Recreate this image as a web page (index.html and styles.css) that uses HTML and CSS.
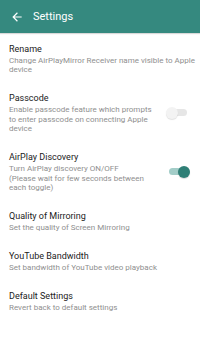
FILE: index.html
```html
<!DOCTYPE html>
<html>
<head>
<meta charset="utf-8">
<link rel="stylesheet" href="styles.css">
</head>
<body>
<header class="appbar">
  <svg class="back" width="14" height="14" viewBox="0 0 24 24"><path d="M20 11H7.83l5.59-5.59L12 4l-8 8 8 8 1.41-1.41L7.83 13H20v-2z" fill="#fff"/></svg>
  <span class="title">Settings</span>
</header>
<main class="list">
  <div class="item">
    <div class="text">
      <div class="name">Rename</div>
      <div class="desc">Change AirPlayMirror Receiver name visible to Apple device</div>
    </div>
  </div>
  <div class="item">
    <div class="text narrow">
      <div class="name">Passcode</div>
      <div class="desc">Enable passcode feature which prompts<br>to enter passcode on connecting Apple<br>device</div>
    </div>
    <div class="switch off"><div class="track"></div><div class="thumb"></div></div>
  </div>
  <div class="item">
    <div class="text narrow">
      <div class="name">AirPlay Discovery</div>
      <div class="desc">Turn AirPlay discovery ON/OFF<br>(Please wait for few seconds between<br>each toggle)</div>
    </div>
    <div class="switch on"><div class="track"></div><div class="thumb"></div></div>
  </div>
  <div class="item">
    <div class="text">
      <div class="name">Quality of Mirroring</div>
      <div class="desc">Set the quality of Screen Mirroring</div>
    </div>
  </div>
  <div class="item">
    <div class="text">
      <div class="name">YouTube Bandwidth</div>
      <div class="desc">Set bandwidth of YouTube video playback</div>
    </div>
  </div>
  <div class="item">
    <div class="text">
      <div class="name">Default Settings</div>
      <div class="desc">Revert back to default settings</div>
    </div>
  </div>
</main>
</body>
</html>
```
FILE: styles.css
```css
html, body {
  margin: 0;
  padding: 0;
  background: #fff;
  font-family: Roboto, "Liberation Sans", sans-serif;
}
.appbar {
  height: 33px;
  background: #35897f;
  display: flex;
  align-items: center;
  box-shadow: 0 1px 1px rgba(0,0,0,0.15);
}
.back {
  margin-left: 10px;
  margin-right: 9px;
}
.title {
  color: #fff;
  font-size: 11px;
  line-height: 13px;
}
.list {
  display: flex;
  flex-direction: column;
}
.item {
  display: flex;
  align-items: center;
  padding: 9.5px 12px 8px 9px;
}
.text {
  flex: 1;
  min-width: 0;
  margin-right: -10px;
}
.text.narrow {
  flex: 0 0 153px;
  margin-right: auto;
  white-space: nowrap;
}
.name {
  font-size: 9px;
  line-height: 13px;
  color: #222;
}
.desc {
  font-size: 8px;
  line-height: 9.5px;
  color: #8f8f8f;
}
.switch {
  position: relative;
  width: 20px;
  height: 12px;
  flex: 0 0 20px;
}
.track {
  position: absolute;
  left: 1px;
  right: 1px;
  top: 2.5px;
  height: 7px;
  border-radius: 4px;
}
.thumb {
  position: absolute;
  top: 0;
  width: 12px;
  height: 12px;
  border-radius: 50%;
}
.off .track { background: #e6e6e6; }
.off .thumb { left: -2px; background: #f3f3f3; box-shadow: 0 1px 1px rgba(0,0,0,0.12); }
.on .track { background: #a3cdc8; }
.on .thumb { right: -2px; background: #2f7f76; box-shadow: 0 1px 1px rgba(0,0,0,0.15); }
```
